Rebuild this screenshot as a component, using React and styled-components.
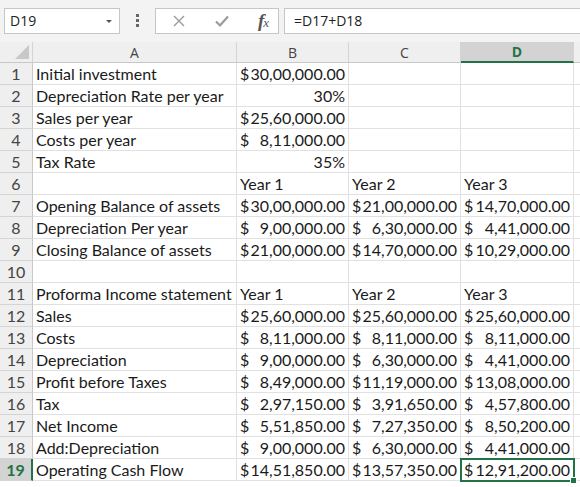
import React from 'react'
import styled, { createGlobalStyle } from 'styled-components'

const GlobalStyle = createGlobalStyle`
	html, body {
		margin: 0;
		padding: 0;
		background: #ffffff;
	}
	body {
		font-family: Lato, "Liberation Sans", sans-serif;
		width: 580px;
		height: 487px;
		overflow: hidden;
	}
`

const GREEN = '#217346'

const money = (s) => ({ money: s })

const rows = [
	['Initial investment', money('30,00,000.00'), '', ''],
	['Depreciation Rate per year', { right: '30%' }, '', ''],
	['Sales per year', money('25,60,000.00'), '', ''],
	['Costs per year', money('8,11,000.00'), '', ''],
	['Tax Rate', { right: '35%' }, '', ''],
	['', 'Year 1', 'Year 2', 'Year 3'],
	['Opening Balance of assets', money('30,00,000.00'), money('21,00,000.00'), money('14,70,000.00')],
	['Depreciation Per year', money('9,00,000.00'), money('6,30,000.00'), money('4,41,000.00')],
	['Closing Balance of assets', money('21,00,000.00'), money('14,70,000.00'), money('10,29,000.00')],
	['', '', '', ''],
	['Proforma Income statement', 'Year 1', 'Year 2', 'Year 3'],
	['Sales', money('25,60,000.00'), money('25,60,000.00'), money('25,60,000.00')],
	['Costs', money('8,11,000.00'), money('8,11,000.00'), money('8,11,000.00')],
	['Depreciation', money('9,00,000.00'), money('6,30,000.00'), money('4,41,000.00')],
	['Profit before Taxes', money('8,49,000.00'), money('11,19,000.00'), money('13,08,000.00')],
	['Tax', money('2,97,150.00'), money('3,91,650.00'), money('4,57,800.00')],
	['Net Income', money('5,51,850.00'), money('7,27,350.00'), money('8,50,200.00')],
	['Add:Depreciation', money('9,00,000.00'), money('6,30,000.00'), money('4,41,000.00')],
	['Operating Cash Flow', money('14,51,850.00'), money('13,57,350.00'), money('12,91,200.00')],
]

const columns = ['A', 'B', 'C', 'D']
const ACTIVE_COL = 3
const ACTIVE_ROW = 19

const CellContent = ({ value }) => {
	if (value && value.money) {
		return (
			<Money>
				<span>$</span>
				<span>{value.money}</span>
			</Money>
		)
	}
	if (value && value.right) {
		return <CellText $align="right">{value.right}</CellText>
	}
	return <CellText>{value}</CellText>
}

const App = () => {
	return (
		<>
			<GlobalStyle />
			<Wrapper>
				<Toolbar>
					<NameBox>
						<span>D19</span>
						<Caret>
							<svg width="8" height="5" viewBox="0 0 8 5">
								<path d="M1 1h6L4 4z" fill="#555" />
							</svg>
						</Caret>
					</NameBox>
					<Dots>
						<i />
						<i />
						<i />
					</Dots>
					<FuncButtons>
						<FuncIcon>
							<svg width="14" height="14" viewBox="0 0 14 14">
								<path d="M2 2l10 10M12 2L2 12" stroke="#9a9a9a" strokeWidth="1.4" fill="none" />
							</svg>
						</FuncIcon>
						<FuncIcon>
							<svg width="16" height="14" viewBox="0 0 16 14">
								<path d="M2 7.5l4 4L14 2.5" stroke="#9a9a9a" strokeWidth="2.2" fill="none" />
							</svg>
						</FuncIcon>
						<Fx>
							<i>f</i>
							<sub>x</sub>
						</Fx>
					</FuncButtons>
					<Formula>=D17+D18</Formula>
				</Toolbar>

				<Sheet>
					<Corner>
						<svg width="14" height="14" viewBox="0 0 14 14">
							<path d="M14 0V14H0z" fill="#c8c8c8" />
						</svg>
					</Corner>
					{columns.map((c, i) => (
						<ColHeader key={c} $active={i === ACTIVE_COL}>
							{c}
						</ColHeader>
					))}
					<ColHeader />

					{rows.map((row, r) => {
						const num = r + 1
						return (
							<React.Fragment key={num}>
								<RowHeader $active={num === ACTIVE_ROW}>{num}</RowHeader>
								{row.map((cell, c) => (
									<Cell key={c} $selected={num === ACTIVE_ROW && c === ACTIVE_COL}>
										<CellContent value={cell} />
									</Cell>
								))}
								<Cell />
							</React.Fragment>
						)
					})}
				</Sheet>
			</Wrapper>
		</>
	)
}

export default App

const Wrapper = styled.div`
	width: 580px;
	height: 487px;
	background: #ffffff;
	overflow: hidden;
`

const Toolbar = styled.div`
	display: flex;
	align-items: center;
	height: 42px;
	padding: 0 0 1px 4px;
	box-sizing: border-box;
	background: #f3f3f3;
	font-family: "Open Sans", "Liberation Sans", sans-serif;
	font-size: 14px;
	color: #222;
`

const NameBox = styled.div`
	display: flex;
	align-items: center;
	justify-content: space-between;
	box-sizing: border-box;
	width: 116px;
	height: 26px;
	padding: 0 6px 0 5px;
	background: #ffffff;
	border: 1px solid #c6c6c6;
`

const Caret = styled.span`
	display: flex;
	padding-top: 1px;
`

const Dots = styled.div`
	display: flex;
	flex-direction: column;
	align-items: center;
	gap: 2px;
	width: 35px;

	> i {
		display: block;
		width: 3px;
		height: 3px;
		background: #666;
	}
`

const FuncButtons = styled.div`
	display: flex;
	align-items: center;
	justify-content: space-between;
	box-sizing: border-box;
	width: 124px;
	height: 26px;
	padding: 0 10px 0 16px;
	background: #ffffff;
	border: 1px solid #c6c6c6;
`

const FuncIcon = styled.span`
	display: flex;
	align-items: center;
`

const Fx = styled.span`
	font-family: "Liberation Serif", serif;
	font-style: italic;
	color: #555;
	font-size: 19px;
	line-height: 1;
	letter-spacing: -1px;

	> i {
		font-weight: bold;
	}
	> sub {
		font-size: 13px;
		vertical-align: 0;
	}
`

const Formula = styled.div`
	display: flex;
	align-items: center;
	flex: 1;
	box-sizing: border-box;
	height: 26px;
	margin-left: 5px;
	padding-left: 9px;
	background: #ffffff;
	border: 1px solid #c6c6c6;
	border-right: none;
`

const Sheet = styled.div`
	display: grid;
	grid-template-columns: 33px 204px 112px 112px 113px 1fr;
	grid-template-rows: 21px;
	grid-auto-rows: 22px;
	font-family: Lato, "Liberation Sans", sans-serif;
	font-size: 16px;
	color: #1a1a1a;
`

const Corner = styled.div`
	display: flex;
	align-items: flex-end;
	justify-content: flex-end;
	padding: 0 3px 3px 0;
	background: #efefef;
	border-right: 1px solid #d4d4d4;
	border-bottom: 1px solid #c8c8c8;
`

const ColHeader = styled.div`
	display: flex;
	align-items: center;
	justify-content: center;
	background: ${({ $active }) => ($active ? '#d3d3d3' : '#efefef')};
	border-right: 1px solid #d4d4d4;
	border-bottom: ${({ $active }) => ($active ? `2px solid ${GREEN}` : '1px solid #c8c8c8')};
	color: ${({ $active }) => ($active ? GREEN : '#444')};
	font-weight: ${({ $active }) => ($active ? 700 : 400)};
	font-family: "Open Sans", "Liberation Sans", sans-serif;
	font-size: 14px;
`

const RowHeader = styled.div`
	display: flex;
	align-items: center;
	justify-content: center;
	background: ${({ $active }) => ($active ? '#d3d3d3' : '#efefef')};
	border-right: ${({ $active }) => ($active ? `2px solid ${GREEN}` : '1px solid #c8c8c8')};
	border-bottom: 1px solid #d4d4d4;
	color: ${({ $active }) => ($active ? GREEN : '#444')};
	font-weight: ${({ $active }) => ($active ? 700 : 400)};
	font-size: 16px;
`

const Cell = styled.div`
	position: relative;
	display: flex;
	align-items: flex-end;
	min-width: 0;
	padding: 0 3px 1px 3px;
	border-right: 1px solid #e1e1e1;
	border-bottom: 1px solid #e1e1e1;
	white-space: nowrap;

	${({ $selected }) =>
		$selected &&
		`
		outline: 2px solid ${GREEN};
		outline-offset: -1px;
		z-index: 1;

		&::after {
			content: '';
			position: absolute;
			right: -4px;
			bottom: -4px;
			width: 5px;
			height: 5px;
			background: ${GREEN};
			border: 1px solid #ffffff;
		}
	`}
`

const CellText = styled.span`
	flex: 1;
	text-align: ${({ $align }) => $align || 'left'};
`

const Money = styled.span`
	display: flex;
	justify-content: space-between;
	flex: 1;
`
